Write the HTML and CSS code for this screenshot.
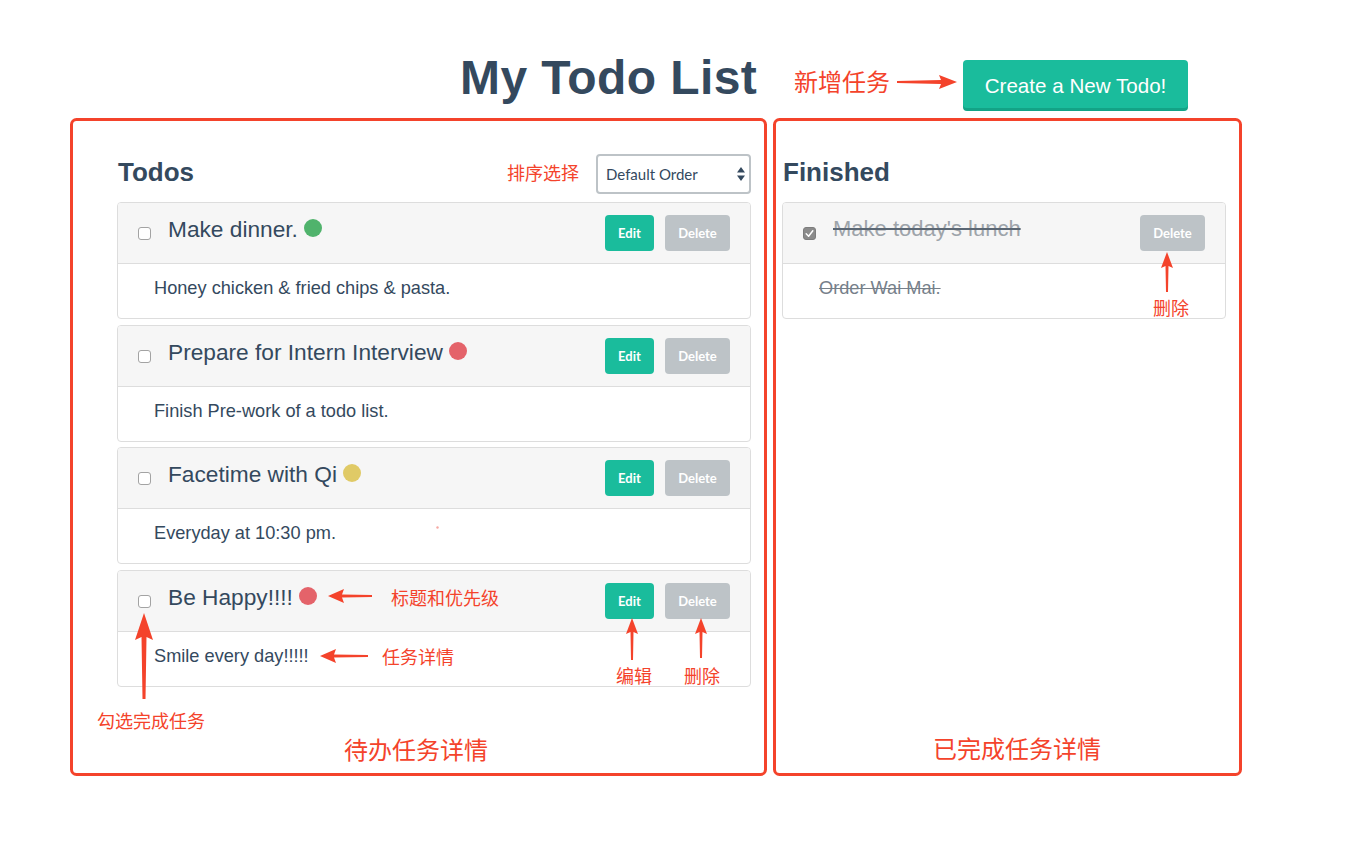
FILE: index.html
```html
<!DOCTYPE html>
<html lang="en">
<head>
<meta charset="utf-8">
<title>My Todo List</title>
<link rel="stylesheet" href="styles.css">
</head>
<body>
<div class="page">
  <header class="topbar">
    <h1 class="title">My Todo List</h1>
    <button class="btn-create" type="button">Create a New Todo!</button>
  </header>

  <main class="board">
    <section class="col col-todos">
      <div class="col-head">
        <h2 class="col-title">Todos</h2>
        <div class="select-wrap">
          <select class="order">
            <option>Default Order</option>
            <option>Priority</option>
          </select>
          <svg class="select-arrows" width="8" height="14" viewBox="0 0 8 14"><path d="M4 0 L8 5.5 L0 5.5 Z M4 14 L8 8.5 L0 8.5 Z" fill="#34495e"/></svg>
        </div>
      </div>

      <div class="list">
        <article class="card">
          <div class="card-head">
            <span class="check"></span>
            <span class="card-title">Make dinner.<span class="dot dot-green"></span></span>
            <div class="actions">
              <button class="btn btn-edit" type="button">Edit</button>
              <button class="btn btn-delete" type="button">Delete</button>
            </div>
          </div>
          <div class="card-body">Honey chicken &amp; fried chips &amp; pasta.</div>
        </article>

        <article class="card">
          <div class="card-head">
            <span class="check"></span>
            <span class="card-title">Prepare for Intern Interview<span class="dot dot-red"></span></span>
            <div class="actions">
              <button class="btn btn-edit" type="button">Edit</button>
              <button class="btn btn-delete" type="button">Delete</button>
            </div>
          </div>
          <div class="card-body">Finish Pre-work of a todo list.</div>
        </article>

        <article class="card">
          <div class="card-head">
            <span class="check"></span>
            <span class="card-title">Facetime with Qi<span class="dot dot-yellow"></span></span>
            <div class="actions">
              <button class="btn btn-edit" type="button">Edit</button>
              <button class="btn btn-delete" type="button">Delete</button>
            </div>
          </div>
          <div class="card-body">Everyday at 10:30 pm.</div>
        </article>

        <article class="card">
          <div class="card-head">
            <span class="check"></span>
            <span class="card-title">Be Happy!!!!<span class="dot dot-red"></span></span>
            <div class="actions">
              <button class="btn btn-edit" type="button">Edit</button>
              <button class="btn btn-delete" type="button">Delete</button>
            </div>
          </div>
          <div class="card-body">Smile every day!!!!!</div>
        </article>
      </div>
    </section>

    <section class="col col-done">
      <div class="col-head">
        <h2 class="col-title">Finished</h2>
      </div>
      <div class="list">
        <article class="card card-done">
          <div class="card-head">
            <span class="check check-on"><svg width="9" height="9" viewBox="0 0 9 9"><path d="M1.2 4.8 L3.6 7.2 L7.8 1.8" fill="none" stroke="#fff" stroke-width="1.5" stroke-linecap="round" stroke-linejoin="round"/></svg></span>
            <span class="card-title">Make today's lunch</span>
            <div class="actions">
              <button class="btn btn-delete" type="button">Delete</button>
            </div>
          </div>
          <div class="card-body">Order Wai Mai.</div>
        </article>
      </div>
    </section>
  </main>

  <div class="notes">
    <svg class="notes-svg" width="1348" height="845" viewBox="0 0 1348 845">
      <g fill="none" stroke="#f4432b" stroke-width="3">
        <rect x="71.5" y="119.5" width="694" height="655" rx="5"/>
        <rect x="774.5" y="119.5" width="466" height="655" rx="5"/>
      </g>
      <g fill="#f4432b">
        <polygon points="897,81 941,80 939,75 957,82 939,89 941,84 897,83"/>
        <polygon points="1166,292 1165.5,266 1161,268 1167,252 1173,268 1168.5,266 1168,292"/>
        <polygon points="372,595 342,594.5 344,589 328,596 344,603 342,597.5 372,597"/>
        <polygon points="368,655 334,654.5 336,649 320,656 336,663 334,657.5 368,657"/>
        <polygon points="631,660 630.5,632 626,634 632,618 638,634 633.5,632 633,660"/>
        <polygon points="700,658 699.5,632 695,634 701,618 707,634 702.5,632 702,658"/>
        <polygon points="142.5,699 141.5,637 135,640 144,613 153,640 146.5,637 145.5,699"/>
      </g>
      <circle cx="437.5" cy="527.5" r="1.2" fill="#f6a9a3"/>
    </svg>
    <span class="note note-lg note-add">新增任务</span>
    <span class="note note-sort">排序选择</span>
    <span class="note note-del-done">删除</span>
    <span class="note note-title">标题和优先级</span>
    <span class="note note-detail">任务详情</span>
    <span class="note note-edit">编辑</span>
    <span class="note note-del">删除</span>
    <span class="note note-check">勾选完成任务</span>
    <span class="note note-lg note-todo">待办任务详情</span>
    <span class="note note-lg note-done">已完成任务详情</span>
  </div>
</div>
</body>
</html>
```

FILE: styles.css
```css
html, body {
  margin: 0;
  padding: 0;
  background: #ffffff;
}

body {
  font-family: "Liberation Sans", Arial, sans-serif;
  color: #34495e;
}

.page {
  position: relative;
  width: 1348px;
  height: 845px;
  overflow: hidden;
}

/* ---------- header ---------- */
.topbar {
  box-sizing: border-box;
  height: 154px;
  width: 1188px;
  padding: 50px 0 0 460px;
  display: flex;
  align-items: flex-start;
  justify-content: space-between;
}

.title {
  margin: 0;
  font-size: 48px;
  line-height: 56px;
  font-weight: 700;
  letter-spacing: 0.4px;
  color: #34495e;
}

.btn-create {
  margin-top: 10px;
  width: 225px;
  height: 48px;
  border: 0;
  border-radius: 4px;
  background: #1abc9c;
  box-shadow: 0 3px 0 #13a386;
  color: #ffffff;
  font-family: "Liberation Sans", Arial, sans-serif;
  font-size: 20.6px;
  padding: 3px 0 0 0;
}

/* ---------- board ---------- */
.board {
  display: flex;
  gap: 31px;
  padding-left: 117px;
  align-items: flex-start;
}

.col-todos { width: 634px; }
.col-done { width: 444px; }

.col-head {
  height: 40px;
  display: flex;
  align-items: center;
  justify-content: space-between;
  margin-bottom: 8px;
}

.col-title {
  margin: 0 0 4px 1px;
  font-size: 26px;
  line-height: 30px;
  font-weight: 700;
  color: #34495e;
}

.select-wrap {
  position: relative;
  width: 155px;
  height: 40px;
}

.order {
  -webkit-appearance: none;
  appearance: none;
  box-sizing: border-box;
  width: 155px;
  height: 40px;
  border: 2px solid #bdc3c7;
  border-radius: 4px;
  background: #ffffff;
  padding: 0 0 0 8px;
  font-family: Lato, "Liberation Sans", sans-serif;
  font-size: 15px;
  color: #34495e;
}

.select-arrows {
  position: absolute;
  right: 6px;
  top: 13px;
}

/* ---------- cards ---------- */
.list {
  display: flex;
  flex-direction: column;
  gap: 5.67px;
}

.card {
  border: 1px solid #dddddd;
  border-radius: 4px;
  overflow: hidden;
  background: #ffffff;
}

.card-head {
  box-sizing: border-box;
  height: 61px;
  background: #f6f6f6;
  border-bottom: 1px solid #dddddd;
  display: flex;
  align-items: center;
  padding: 0 20px 0 20px;
}

.check {
  box-sizing: border-box;
  flex: none;
  width: 13px;
  height: 13px;
  border: 1px solid #a3a3a3;
  border-radius: 3px;
  background: #ffffff;
  display: flex;
  align-items: center;
  justify-content: center;
  margin-top: 1px;
}

.check-on {
  background: #8b8b8b;
  border-color: #7d7d7d;
}

.card-title {
  margin-left: 17px;
  margin-bottom: 8px;
  font-size: 22.7px;
  line-height: 26px;
  color: #34495e;
  display: flex;
  align-items: center;
}

.dot {
  display: inline-block;
  width: 18px;
  height: 18px;
  border-radius: 50%;
  margin-left: 6px;
  margin-bottom: 2px;
}

.dot-green { background: #50b36c; }
.dot-red { background: #e4636a; }
.dot-yellow { background: #e0ca66; }

.actions {
  margin-left: auto;
  display: flex;
  gap: 11px;
}

.btn {
  height: 36px;
  border: 0;
  border-radius: 4px;
  padding: 0;
  color: #ffffff;
  font-family: Lato, "Liberation Sans", sans-serif;
  font-weight: 700;
  font-size: 13px;
}

.btn-edit {
  width: 49px;
  background: #1abc9c;
}

.btn-delete {
  width: 65px;
  background: #bdc3c7;
}

.card-body {
  box-sizing: border-box;
  height: 54px;
  display: flex;
  align-items: center;
  padding: 0 0 5px 36px;
  font-size: 18.2px;
  color: #34495e;
}

.card-done .card-title {
  font-size: 22px;
  color: #9ea4aa;
  text-decoration: line-through;
  text-decoration-color: #5b6774;
}

.card-done .card-body {
  color: #76808a;
  text-decoration: line-through;
}

/* ---------- annotations ---------- */
.notes {
  position: absolute;
  inset: 0;
  pointer-events: none;
}

.notes-svg {
  position: absolute;
  left: 0;
  top: 0;
}

.note {
  position: absolute;
  font-family: "Noto Sans CJK SC", sans-serif;
  font-size: 18px;
  line-height: 18px;
  color: #f4432b;
  white-space: nowrap;
}

.note-lg {
  font-size: 24px;
  line-height: 24px;
}

.note-add { left: 794px; top: 69px; }
.note-sort { left: 507px; top: 163px; }
.note-del-done { left: 1153px; top: 298px; }
.note-title { left: 391px; top: 588px; }
.note-detail { left: 382px; top: 647px; }
.note-edit { left: 616px; top: 666px; }
.note-del { left: 684px; top: 666px; }
.note-check { left: 97px; top: 711px; }
.note-todo { left: 344px; top: 737px; }
.note-done { left: 933px; top: 736px; }
```
